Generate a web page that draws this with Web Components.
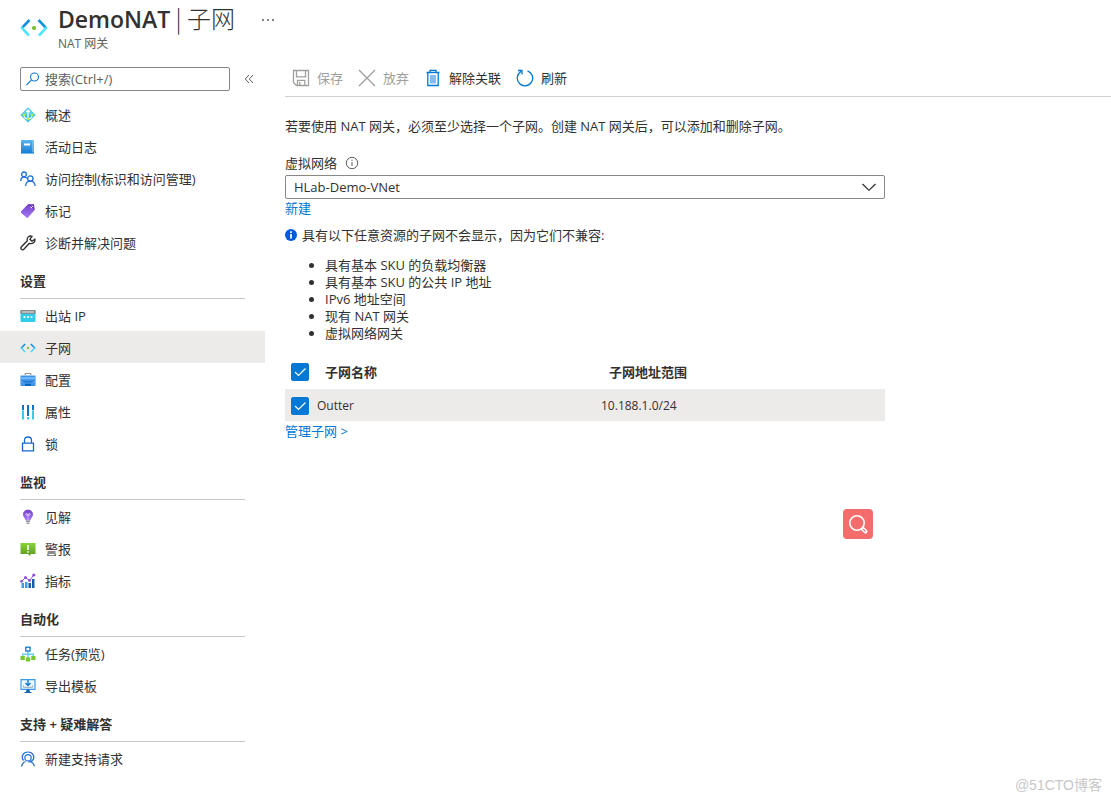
<!DOCTYPE html>
<html lang="zh-CN">
<head>
<meta charset="utf-8">
<title>DemoNAT | 子网</title>
<style>
  body {
    margin: 0;
    background: #fff;
    color: #323130;
    font: 13px/18px "Open Sans", "Noto Sans CJK SC", sans-serif;
  }
</style>
</head>
<body>
<nat-app></nat-app>
<script>
const gradients = `
  <linearGradient id="blue" x1="0" y1="0" x2="0" y2="1"><stop offset="0" stop-color="#5ab4f0"/><stop offset="1" stop-color="#0f7bd6"/></linearGradient>
  <linearGradient id="violet" x1="0" y1="0" x2="0" y2="1"><stop offset="0" stop-color="#7340c8"/><stop offset="1" stop-color="#a67af4"/></linearGradient>
  <linearGradient id="green" x1="0" y1="0" x2="0" y2="1"><stop offset="0" stop-color="#86d633"/><stop offset="1" stop-color="#5e9624"/></linearGradient>`;

const icons = {
  subnet: [28, `<path d="M9.5 5 1.8 13.2" stroke="#1490df" stroke-width="2.6"/><path d="M1.2 12.2 9 20.5" stroke="#50e6ff" stroke-width="2.6"/><path d="M18.5 5 26.2 13.2" stroke="#1490df" stroke-width="2.6"/><path d="M26.8 12.2 19 20.5" stroke="#50e6ff" stroke-width="2.6"/><circle cx="14" cy="13" r="2.1" fill="#76bc2d"/>`],
  subnetSmall: [16, `<path d="M5.2 4 1 8.2" stroke="#1490df" stroke-width="1.6"/><path d="M1 7.8 5.2 12" stroke="#50d6ff" stroke-width="1.6"/><path d="M10.8 4 15 8.2" stroke="#1490df" stroke-width="1.6"/><path d="M15 7.8 10.8 12" stroke="#50d6ff" stroke-width="1.6"/><circle cx="8" cy="8" r="1.2" fill="#86c440"/>`],
  search: [16, `<circle cx="9.5" cy="6" r="4" stroke="#0f78d4" stroke-width="1.1"/><path d="M6.6 8.9 1.5 14" stroke="#0f78d4" stroke-width="1.1"/>`],
  overview: [16, `<path d="M8 .6 15.5 8 8 15.4.5 8Z" fill="#37c2e8"/><path d="M8 .6 15.5 8H.5Z" fill="#5fd0ea"/><path d="M8 4v7M8 3 6.3 5M8 3l1.7 2M4 8.5c0 2 2 3.4 4 3.4s4-1.4 4-3.4" stroke="#fff" stroke-width="1.2"/><circle cx="4" cy="8" r="1.3" fill="#b4ec36"/><circle cx="12" cy="8" r="1.3" fill="#b4ec36"/><circle cx="8" cy="12" r="1.3" fill="#b4ec36"/>`],
  log: [16, `<rect x="1" y="1" width="13" height="14" rx="1" fill="url(#blue)"/><path d="M13 1.5v12" stroke="#9bd0f5"/><path d="M1.5 14.5h12" stroke="#76bcf0"/><rect x="4" y="4.5" width="6" height="2" fill="#fff"/>`],
  people: [16, `<g stroke="#2370d8" stroke-width="1.3"><circle cx="4" cy="3.4" r="2.4"/><path d="M.7 10c.2-2.5 1.5-4 3.3-4s2.5.7 3 1.5"/><circle cx="10.3" cy="7.5" r="2.7"/><path d="M5.6 15c.3-2.8 2-4.8 4.7-4.8s4.5 2 4.9 4.800"/></g>`],
  tag: [16, `<path d="m1.2 8.3 6.7-7 6-.2 1 5.7-6.8 7.8q-.8.8-1.6 0L1.2 9.900q-.7-.8 0-1.600Z" fill="url(#violet)"/><circle cx="11.800" cy="4" r="1.200" fill="#fff"/><path d="m9.500 1.500 4.300 4.200" stroke="#53299d"/>`],
  wrench: [16, `<path d="M14.8 4.2 12 6.2 9.9 4.3 12 1.3C9.2.2 6.5 2.5 7.3 5.7L1.2 12c-1.1 1.2.7 3.8 2.4 2.5l5.7-6.2c3.2 1 6.2-1.2 5.5-4.1Z" stroke="#292827" stroke-width="1.3"/>`],
  ip: [16, `<rect x=".5" y="2" width="15" height="12" rx="1" fill="#32cce8"/><path d="M.5 5.8V2.8q0-.8.8-.8h13.400q.8 0 .8.8v3Z" fill="#858789"/><path d="M2 4h12" stroke="#eee"/><circle cx="4.5" cy="9" r="1.1" fill="#fff"/><circle cx="8" cy="9" r="1.1" fill="#fff"/><circle cx="11.5" cy="9" r="1.1" fill="#fff"/>`],
  toolbox: [16, `<path d="M5.3 3V1.500h5.500V3" stroke="#999" stroke-width="1.2"/><rect x=".5" y="3.5" width="15" height="10.5" rx=".6" fill="#3c91e8"/><path d="M.5 5.2h15v2H.5Z" fill="#75bafa"/><path d="M3 9.500h10l-2 2v2.500H5v-2.500Z" fill="#0864be"/><path d="M.5 8.500 3 11h10l2.500-2.500" stroke="#5cadf4"/>`],
  sliders: [16, `<path d="M3 1v5M8 1v11M13 1v5" stroke="#0f73c9" stroke-width="2"/><path d="M3 6.5V15.5M8 13v2.5M13 6.5V15.5" stroke="#36cce9" stroke-width="2"/>`],
  lock: [16, `<path d="M2.5 7.2h11v7.7h-11ZM4.5 7V4.3q0-3.3 3.5-3.3t3.5 3.3V7" stroke="#1967d2" stroke-width="1.3"/>`],
  bulb: [16, `<path d="M8 .8c3 0 5 2.100 5 4.700 0 2.500-2.300 3.700-2.700 6H5.700C5.300 9.200 3 8 3 5.500 3 2.900 5 .8 8 .8Z" fill="url(#violet)"/><path d="M8 11V6.500M8 6.500l-1-2q-2 0-1 1.500l2 .5 2-.5q1-1.500-1-1.500Z" stroke="#dec9fc" stroke-width=".8"/><path d="M6 12.300h4M6.600 14.200h2.800" stroke="#999" stroke-width="1.4"/>`],
  alert: [16, `<path d="M.5 2h15v11H10.500v2.200L8 13H.5Z" fill="url(#green)"/><path d="M8 4v5M8 10.200v1.500" stroke="#fff" stroke-width="1.6"/>`],
  metrics: [16, `<path d="M1.5 10h2.500v5H1.500ZM5 9h2.500v6H5Z" fill="#3d9ce8"/><path d="M8.500 10H11v5H8.500ZM12 6h2.500v9H12Z" fill="#165da5"/><path d="m1.500 8.500 4-4 4 3.200L13.800 2" stroke="#8a52d9"/><g fill="#8a52d9"><circle cx="1.6" cy="8.3" r="1.4"/><circle cx="5.5" cy="4.5" r="1.5"/><circle cx="9.5" cy="7.5" r="1.4"/><circle cx="13.8" cy="2" r="1.6"/></g>`],
  tasks: [16, `<path d="M8 5v7M2.800 11V8.200h10.400V11" stroke="#44c8e8" stroke-width="1.2"/><rect x="5.8" y="1.2" width="4.2" height="3.8" stroke="#1477c9" stroke-width="1.3"/><path d="M.5 10h4.300v4H.5ZM5.800 11.500h4.400v4H5.800ZM11.200 10h4.300v4h-4.300Z" fill="#75c72c"/>`],
  exportTemplate: [16, `<path d="M1 1.700h14v9.600H1Z" fill="#eaf7ff" stroke="#3c9be8" stroke-width="1.2"/><path d="M8 2v5.500M5.500 5 8 7.500 10.500 5" stroke="#137ad1" stroke-width="1.4"/><path d="M3.500 7.500v1.800h9V7.500" stroke="#9babb8"/><path d="M6.500 11.500h3L10 14h1.500v1H4.500v-1H6Z" fill="#1665ad"/>`],
  support: [16, `<g stroke="#2370d8" stroke-width="1.2"><path d="M3.600 9.500C.5 6 3 1 8 1s7.500 5 4.400 8.500c-1 1.200-2.300 1.500-4.300 1.500"/><circle cx="8" cy="6.8" r="3.2"/><path d="M1.500 15.500c.4-2.600 1.800-4.200 4-5M14.500 15.500c-.4-2.300-1.600-3.800-3.600-4.500"/></g>`],
  save: [18, `<path d="M1.5 1.5h15v15h-12l-3-3Z" stroke="#a19f9d" stroke-width="1.3"/><path d="M4.500 1.500v6.300h9V1.500M5.500 16.500v-5.200h7.300v5.200M7.800 13v3" stroke="#a19f9d" stroke-width="1.3"/>`],
  discard: [18, `<path d="M1 1 17 17M17 1 1 17" stroke="#a19f9d" stroke-width="1.3"/>`],
  trash: [18, `<path d="M2.500 3.500h13M6 3.500V1.300h6v2.200M3.800 3.500v13h10.400v-13" stroke="#0078d4" stroke-width="1.3"/><path d="M6 6h6v8.500H6Z" fill="#83bcec"/>`],
  refresh: [18, `<path d="M11.500 1.800A7.700 7.700 0 1 1 5 2.500M2 1.500h4v4" stroke="#0078d4" stroke-width="1.3"/>`],
  info: [14, `<circle cx="7" cy="7" r="5.7" stroke="#605e5c"/><path d="M7 6v4M7 3.800v1.200" stroke="#605e5c"/>`],
  infoFilled: [14, `<circle cx="7" cy="7" r="6" fill="#015cda"/><path d="M7 6v4.600M7 3.200v1.700" stroke="#fff" stroke-width="1.7"/>`],
  chevron: [16, `<path d="M1.500 5 8 11.300 14.500 5" stroke="#201f1e" stroke-width="1.1"/>`],
  check: [18, `<path d="m4 9 3.500 3.500 7-7" stroke="#fff" stroke-width="1.2"/>`],
  collapse: [10, `<path d="M5 1 1.300 5 5 9M9 1 5.300 5 9 9" stroke="#605e5c"/>`],
  more: [14, `<g fill="#484644"><circle cx="2" cy="7" r=".9"/><circle cx="7" cy="7" r=".9"/><circle cx="12" cy="7" r=".9"/></g>`],
  magnifier: [30, `<circle cx="14" cy="14" r="7.2" stroke="#fff" stroke-width="1.6"/><path d="m20 20 2.500 2.500" stroke="#fff" stroke-width="4" stroke-linecap="round"/><path d="m20.300 20.300 1.800 1.800" stroke="#f56c6c" stroke-width="1.2" stroke-linecap="round"/>`]
};

function define(name, html, setup) {
  const template = document.createElement("template");
  template.innerHTML = html;
  customElements.define(name, class extends HTMLElement {
    connectedCallback() {
      if (this.shadowRoot) return;
      this.attachShadow({ mode: "open" }).append(template.content.cloneNode(true));
      if (setup) setup(this, this.shadowRoot);
    }
  });
}

define("nat-icon", `<style>:host{display:block;flex:none} svg{display:block}</style>`, (host, root) => {
  const [size, shapes] = icons[host.getAttribute("name")];
  root.innerHTML += `<svg width="${size}" height="${size}" viewBox="0 0 ${size} ${size}" fill="none" aria-hidden="true"><defs>${gradients}</defs>${shapes}</svg>`;
});

define("blade-header", `
<style>
  :host { display: flex; gap: 10px; padding: 2px 20px 0; height: 57px; box-sizing: border-box; }
  nat-icon { margin-top: 13px; }
  h1 { margin: 0; font: 300 24px/32px "Noto Sans CJK SC", sans-serif; }
  ::slotted(strong) { font: 600 23px/32px "Open Sans", sans-serif; }
  p { margin: 1px 0 0; font-size: 12px; line-height: 16px; color: #605e5c; }
  button { margin: 11px 0 0 16px; width: 14px; height: 14px; padding: 0; border: 0; background: none; }
  button nat-icon { margin: 0; }
</style>
<nat-icon name="subnet"></nat-icon>
<div><h1><slot></slot></h1><p><slot name="kind"></slot></p></div>
<button aria-label="更多"><nat-icon name="more"></nat-icon></button>`);

define("menu-search", `
<style>
  :host { display: flex; align-items: center; gap: 14px; padding: 10px 0 7px 20px; }
  label { display: flex; align-items: center; gap: 4px; width: 210px; height: 24px; box-sizing: border-box; padding-left: 4px; border: 1px solid #8a8886; border-radius: 2px; }
  input { flex: 1; min-width: 0; padding: 0; border: 0; outline: 0; background: none; font: inherit; color: inherit; }
  input::placeholder { color: #605e5c; opacity: 1; }
  button { padding: 0; border: 0; background: none; }
</style>
<label><nat-icon name="search"></nat-icon><input type="text" aria-label="搜索" placeholder="搜索(Ctrl+/)"></label>
<button aria-label="折叠"><nat-icon name="collapse"></nat-icon></button>`);

define("menu-item", `
<style>
  :host { display: block; }
  a { display: flex; align-items: center; gap: 9px; height: 32px; box-sizing: border-box; padding: 2px 0 0 20px; color: inherit; text-decoration: none; }
  :host([current]) a { background: #edebe9; }
</style>
<a href="#"><span><slot></slot></span></a>`, (host, root) => {
  const link = root.querySelector("a");
  const icon = document.createElement("nat-icon");
  icon.setAttribute("name", host.getAttribute("icon"));
  link.prepend(icon);
  if (host.hasAttribute("current")) link.setAttribute("aria-current", "page");
});

define("menu-section", `
<style>
  :host { display: block; }
  h2 { margin: 0 20px; padding: 14px 0 8px; border-bottom: 1px solid #c8c6c4; font-size: 13px; line-height: 18px; font-weight: 600; }
</style>
<h2></h2><slot></slot>`, (host, root) => {
  root.querySelector("h2").textContent = host.getAttribute("heading");
});

define("command-button", `
<style>
  :host { display: block; }
  button { display: flex; align-items: center; gap: 7px; padding: 0; border: 0; background: none; font: inherit; color: inherit; }
  button:disabled { color: #a19f9d; }
</style>
<button><slot name="icon"></slot><span><slot></slot></span></button>`, (host, root) => {
  root.querySelector("button").disabled = host.hasAttribute("disabled");
});

define("command-bar", `
<style>
  :host { display: flex; align-items: center; gap: 15px; height: 39px; padding-left: 7px; border-bottom: 1px solid #d2d0ce; }
  ::slotted(command-button) { padding-top: 3px; }
</style><slot></slot>`);

define("network-picker", `
<style>
  :host { display: block; }
  .label { display: flex; align-items: center; gap: 8px; line-height: 18px; margin-bottom: 3px; }
  .box { display: grid; align-items: center; }
  select, .box nat-icon { grid-area: 1 / 1; }
  select { appearance: none; width: 100%; height: 24px; padding: 0 8px; border: 1px solid #8a8886; border-radius: 2px; background: #fff; font: inherit; color: inherit; }
  .box nat-icon { justify-self: end; margin-right: 8px; pointer-events: none; }
  a { color: #0078d4; text-decoration: none; }
</style>
<div class="label"><label for="network">虚拟网络</label><nat-icon name="info"></nat-icon></div>
<div class="box"><select id="network"><option>HLab-Demo-VNet</option></select><nat-icon name="chevron"></nat-icon></div>
<a href="#">新建</a>`);

define("info-note", `
<style>
  :host { display: block; }
  p { display: flex; align-items: center; gap: 4px; margin: 0; }
  nat-icon { margin-left: -1px; }
  ul { margin: 13px 0 0; padding-left: 40px; line-height: 17px; }
</style>
<p><nat-icon name="infoFilled"></nat-icon>具有以下任意资源的子网不会显示，因为它们不兼容:</p>
<ul><li>具有基本 SKU 的负载均衡器</li><li>具有基本 SKU 的公共 IP 地址</li><li>IPv6 地址空间</li><li>现有 NAT 网关</li><li>虚拟网络网关</li></ul>`);

define("check-box", `
<style>
  :host { display: grid; width: 18px; height: 18px; margin-left: 6px; }
  input, nat-icon { grid-area: 1 / 1; }
  input { appearance: none; width: 18px; height: 18px; margin: 0; border: 1px solid #0078d4; border-radius: 2px; }
  input:checked { background: #0078d4; }
  nat-icon { pointer-events: none; }
</style>
<input type="checkbox" checked><nat-icon name="check"></nat-icon>`, (host, root) => {
  root.querySelector("input").setAttribute("aria-label", host.getAttribute("label"));
});

define("subnet-table", `
<style>
  :host { display: block; }
  table { width: 100%; border-collapse: collapse; table-layout: fixed; }
  th, td { padding: 0; text-align: left; }
  td { height: 30px; padding-top: 2px; font-size: 12px; }
  thead th { height: 35px; padding-left: 8px; font-weight: 600; }
  thead th:first-child { padding-left: 0; }
  .pick { width: 32px; }
  .name { width: 276px; }
  tbody tr { background: #edebe9; }
</style>
<table>
  <thead><tr><th class="pick"><check-box label="全选"></check-box></th><th class="name">子网名称</th><th>子网地址范围</th></tr></thead>
  <tbody><tr><td><check-box label="Outter"></check-box></td><td>Outter</td><td>10.188.1.0/24</td></tr></tbody>
</table>`);

define("zoom-button", `
<style>
  :host { position: absolute; right: 238px; top: 509px; }
  button { display: block; padding: 0; border: 0; border-radius: 4px; background: #f56c6c; }
</style>
<button aria-label="放大"><nat-icon name="magnifier"></nat-icon></button>`);

define("nat-app", `
<style>
  :host { display: block; position: relative; min-height: 100vh; }
  .columns { display: grid; grid-template-columns: 265px minmax(0, 1fr); }
  main { padding-left: 20px; }
  .content { display: flex; flex-direction: column; max-width: 600px; padding-top: 20px; }
  .content p { margin: 0 0 19px; }
  info-note { margin-top: 9px; }
  subnet-table { margin-top: 12px; }
  a { color: #0078d4; text-decoration: none; align-self: start; margin-top: 1px; }
  footer { position: absolute; right: 9px; bottom: 7px; color: #c8c8c8; font: 14px/20px "Liberation Sans", "Noto Sans CJK SC", sans-serif; }
</style>
<blade-header><strong>DemoNAT</strong> | 子网<span slot="kind">NAT 网关</span></blade-header>
<div class="columns">
  <nav aria-label="资源菜单">
    <menu-search></menu-search>
    <menu-item icon="overview">概述</menu-item>
    <menu-item icon="log">活动日志</menu-item>
    <menu-item icon="people">访问控制(标识和访问管理)</menu-item>
    <menu-item icon="tag">标记</menu-item>
    <menu-item icon="wrench">诊断并解决问题</menu-item>
    <menu-section heading="设置">
      <menu-item icon="ip">出站 IP</menu-item>
      <menu-item icon="subnetSmall" current>子网</menu-item>
      <menu-item icon="toolbox">配置</menu-item>
      <menu-item icon="sliders">属性</menu-item>
      <menu-item icon="lock">锁</menu-item>
    </menu-section>
    <menu-section heading="监视">
      <menu-item icon="bulb">见解</menu-item>
      <menu-item icon="alert">警报</menu-item>
      <menu-item icon="metrics">指标</menu-item>
    </menu-section>
    <menu-section heading="自动化">
      <menu-item icon="tasks">任务(预览)</menu-item>
      <menu-item icon="exportTemplate">导出模板</menu-item>
    </menu-section>
    <menu-section heading="支持 + 疑难解答">
      <menu-item icon="support">新建支持请求</menu-item>
    </menu-section>
  </nav>
  <main>
    <command-bar>
      <command-button disabled><nat-icon slot="icon" name="save"></nat-icon>保存</command-button>
      <command-button disabled><nat-icon slot="icon" name="discard"></nat-icon>放弃</command-button>
      <command-button><nat-icon slot="icon" name="trash"></nat-icon>解除关联</command-button>
      <command-button><nat-icon slot="icon" name="refresh"></nat-icon>刷新</command-button>
    </command-bar>
    <div class="content">
      <p>若要使用 NAT 网关，必须至少选择一个子网。创建 NAT 网关后，可以添加和删除子网。</p>
      <network-picker></network-picker>
      <info-note></info-note>
      <subnet-table></subnet-table>
      <a href="#">管理子网 &gt;</a>
    </div>
  </main>
</div>
<zoom-button></zoom-button>
<footer>@51CTO博客</footer>`);
</script>
</body>
</html>
